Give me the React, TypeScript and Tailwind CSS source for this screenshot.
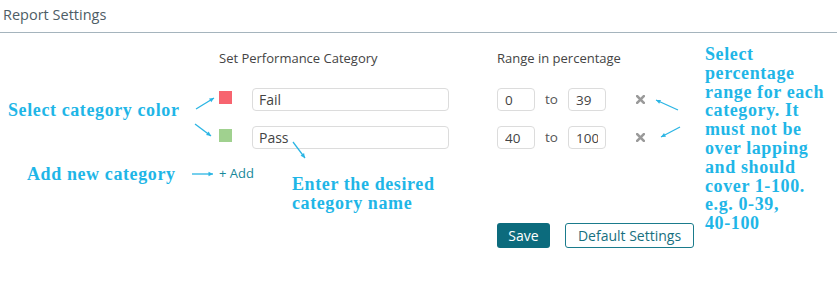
type Category = {
  name: string;
  color: string;
  from: string;
  to: string;
};

const categories: Category[] = [
  { name: "Fail", color: "bg-[#f7646f]", from: "0", to: "39" },
  { name: "Pass", color: "bg-[#a0d18f]", from: "40", to: "100" },
];

const Note = ({ className, children }: { className: string; children: React.ReactNode }) => (
  <div
    className={`absolute whitespace-nowrap font-['Liberation_Serif',serif] font-bold text-[18px] tracking-[0.6px] leading-[18.8px] text-[#1fb6e7] ${className}`}
  >
    {children}
  </div>
);

const Arrow = ({ x1, y1, x2, y2 }: { x1: number; y1: number; x2: number; y2: number }) => {
  const a = Math.atan2(y2 - y1, x2 - x1);
  const len = 5;
  const p1 = [x2 - len * Math.cos(a - 0.45), y2 - len * Math.sin(a - 0.45)];
  const p2 = [x2 - len * Math.cos(a + 0.45), y2 - len * Math.sin(a + 0.45)];
  return (
    <g>
      <line x1={x1} y1={y1} x2={x2} y2={y2} stroke="#2bb5e4" strokeWidth={1.3} />
      <polygon points={`${x2},${y2} ${p1[0]},${p1[1]} ${p2[0]},${p2[1]}`} fill="#2bb5e4" />
    </g>
  );
};

const RemoveIcon = () => (
  <svg width={9} height={9} viewBox="0 0 9 9" className="ml-[30px]">
    <path d="M1.2 1.2 L7.8 7.8 M7.8 1.2 L1.2 7.8" stroke="#9a9a9a" strokeWidth={2.6} strokeLinecap="square" />
  </svg>
);

const RangeBox = ({ value }: { value: string }) => (
  <input
    readOnly
    value={value}
    className="w-[38px] h-[23px] rounded-[4px] border border-[#dcdcdc] px-[7px] text-[13.5px] text-[#444] outline-none"
  />
);

export default function App() {
  return (
    <div className="relative w-[837px] h-[288px] bg-white font-['Open_Sans',sans-serif] overflow-hidden">
      <div className="h-[33px] border-b border-[#a5b4bd] pl-[3px] pt-[5px]">
        <h1 className="text-[14.5px] leading-[19px] text-[#4e5d66]">Report Settings</h1>
      </div>

      <div className="flex pt-[16px] pl-[219px]">
        <div className="w-[278px]">
          <div className="text-[13px] leading-[18px] text-[#444]">Set Performance Category</div>
          <div className="mt-[21px] flex flex-col gap-[15px]">
            {categories.map((c) => (
              <div key={c.name} className="flex items-start h-[23px]">
                <span className={`mt-[3px] w-[13px] h-[13px] ${c.color}`} />
                <input
                  readOnly
                  value={c.name}
                  className="ml-[20px] w-[197px] h-[23px] rounded-[4px] border border-[#dcdcdc] px-[6px] text-[14px] text-[#444] outline-none"
                />
              </div>
            ))}
          </div>
          <div className="mt-[15px] text-[13px] leading-[18px] text-[#17899a]">+ Add</div>
        </div>

        <div>
          <div className="text-[13px] leading-[18px] text-[#444]">Range in percentage</div>
          <div className="mt-[21px] flex flex-col gap-[15px]">
            {categories.map((c) => (
              <div key={c.name} className="flex items-center h-[23px]">
                <RangeBox value={c.from} />
                <span className="ml-[10px] w-[23px] text-[13.5px] text-[#555]">to</span>
                <RangeBox value={c.to} />
                <RemoveIcon />
              </div>
            ))}
          </div>
          <div className="mt-[74px] flex gap-[15px]">
            <button className="h-[25px] w-[53px] rounded-[3px] bg-[#0c6b7d] text-[14px] text-white">Save</button>
            <button className="h-[25px] w-[129px] rounded-[3px] border border-[#1a7b8c] text-[14px] text-[#17707f]">
              Default Settings
            </button>
          </div>
        </div>
      </div>

      <Note className="left-[8px] top-[101px]">Select category color</Note>
      <Note className="left-[27px] top-[165px]">Add new category</Note>
      <Note className="left-[292px] top-[175px]">
        Enter the desired
        <br />
        category name
      </Note>
      <Note className="left-[705px] top-[45px]">
        Select
        <br />
        percentage
        <br />
        range for each
        <br />
        category. It
        <br />
        must not be
        <br />
        over lapping
        <br />
        and should
        <br />
        cover 1-100.
        <br />
        e.g. 0-39,
        <br />
        40-100
      </Note>

      <svg className="absolute left-0 top-0 pointer-events-none" width={837} height={288}>
        <Arrow x1={196} y1={109} x2={214} y2={98} />
        <Arrow x1={195} y1={124} x2={211} y2={136} />
        <Arrow x1={192} y1={174} x2={213} y2={174} />
        <Arrow x1={293} y1={142} x2={305} y2={158} />
        <Arrow x1={678} y1={110} x2={656} y2={100} />
        <Arrow x1={680} y1={127} x2={661} y2={137} />
      </svg>
    </div>
  );
}
